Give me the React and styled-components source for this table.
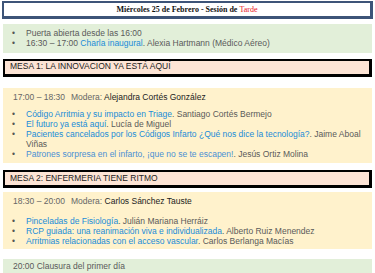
import React from 'react';
import styled, { createGlobalStyle } from 'styled-components';

const GlobalStyle = createGlobalStyle`
  html, body { margin: 0; padding: 0; background: #ffffff; }
  body { font-family: "Liberation Sans", Arial, sans-serif; }
`;

const Page = styled.div`
  width: 375px;
  padding-top: 1px;
  display: flex;
  flex-direction: column;
  font-size: 8.5px;
  line-height: 9.8px;
  color: #5a5a5a;
`;

const Header = styled.div`
  margin: 0 2px;
  height: 13px;
  border: 2px solid #3d5478;
  border-right-width: 3px;
  border-bottom-width: 3px;
  display: flex;
  align-items: center;
  justify-content: center;
  font-family: "Liberation Serif", "Times New Roman", serif;
  font-size: 8px;
  font-weight: bold;
  color: #111;
`;

const Red = styled.span`
  color: #e8141b;
  font-weight: normal;
`;

const Panel = styled.div`
  margin: ${p => p.$mt || 0}px 3px 0;
  background: ${p => p.$bg};
  padding: ${p => p.$pad || '5px 0 4px 8px'};
`;

const MesaTitle = styled.div`
  margin: ${p => p.$mt}px 3px 0;
  height: 13px;
  background: #fde4d5;
  border: 2px solid #000;
  border-right-width: 3px;
  border-bottom-width: 3px;
  display: flex;
  align-items: center;
  padding-left: 5px;
  color: #222;
  font-size: 8.5px;
`;

const List = styled.ul`
  list-style: none;
  margin: ${p => p.$mt || 0}px 0 0;
  padding: 0;
`;

const Item = styled.li`
  display: flex;
  &::before {
    content: "•";
    width: 14px;
    flex: none;
    color: #555;
    padding-left: 1px;
  }
`;

const Link = styled.span`
  color: ${p => p.$light ? '#4a90d4' : '#1a8cd8'};
`;

const TimeRow = styled.div`
  padding-left: 2px;
  color: #666;
`;

const Name = styled.span`
  color: #222;
`;

const Gap = styled.span`
  display: inline-block;
  width: 6px;
`;

export default function App() {
  return (
    <>
      <GlobalStyle />
      <Page>
        <Header>
          Miércoles 25 de Febrero - Sesión de&nbsp;<Red>Tarde</Red>
        </Header>

        <Panel $mt={5} $bg="#e2efd9">
          <List>
            <Item>Puerta abierta desde las 16:00</Item>
            <Item>
              <span>16:30 – 17:00 <Link>Charla inaugural</Link>. Alexia Hartmann (Médico Aéreo)</span>
            </Item>
          </List>
        </Panel>

        <MesaTitle $mt={6}>MESA 1: LA INNOVACION YA ESTÁ AQUÍ</MesaTitle>

        <Panel $mt={11} $bg="#fff2cc" $pad="5px 6px 4px 8px">
          <TimeRow>
            17:00 – 18:30<Gap />Modera: <Name>Alejandra Cortés González</Name>
          </TimeRow>
          <List $mt={8}>
            <Item>
              <span><Link>Código Arritmia y su impacto en Triage</Link>. Santiago Cortés Bermejo</span>
            </Item>
            <Item>
              <span><Link>El futuro ya está aquí</Link>. Lucía de Miguel</span>
            </Item>
            <Item>
              <span><Link>Pacientes cancelados por los Códigos Infarto ¿Qué nos dice la tecnología?</Link>. Jaime Aboal Viñas</span>
            </Item>
            <Item>
              <span><Link $light>Patrones sorpresa en el infarto, ¡que no se te escapen!</Link>. Jesús Ortiz Molina</span>
            </Item>
          </List>
        </Panel>

        <MesaTitle $mt={7}>MESA 2: ENFERMERIA TIENE RITMO</MesaTitle>

        <Panel $mt={4} $bg="#fff2cc" $pad="5px 6px 2px 8px">
          <TimeRow>
            18:30 – 20:00<Gap />Modera: <Name>Carlos Sánchez Tauste</Name>
          </TimeRow>
          <List $mt={10}>
            <Item>
              <span><Link>Pinceladas de Fisiología</Link>. Julián Mariana Herráiz</span>
            </Item>
            <Item>
              <span><Link>RCP guiada: una reanimación viva e individualizada</Link>. Alberto Ruiz Menendez</span>
            </Item>
            <Item>
              <span><Link>Arritmias relacionadas con el acceso vascular</Link>. Carlos Berlanga Macías</span>
            </Item>
          </List>
        </Panel>

        <Panel $mt={10} $bg="#e2efd9" $pad="3px 0 3px 10px">
          20:00 Clausura del primer día
        </Panel>
      </Page>
    </>
  );
}
